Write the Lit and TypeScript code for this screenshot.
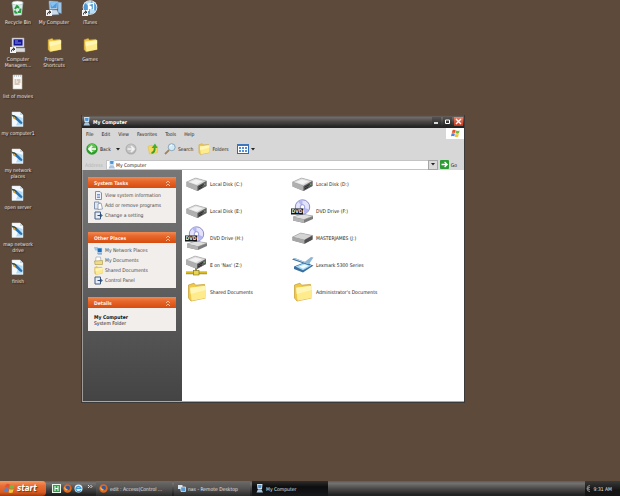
import { LitElement, html, css, svg, TemplateResult, SVGTemplateResult } from "lit";
import { customElement } from "lit/decorators.js";

const icon = (body: SVGTemplateResult, w: number, h: number, box = `0 0 ${w} ${h}`) =>
  html`<svg width=${w} height=${h} viewBox=${box} aria-hidden="true">${body}</svg>`;

const shortcutArrow = svg`<rect x="0" y="10" width="6" height="6" fill="#f4f4f4"/><path d="M1.5 14.5C1.5 12.5 2.5 12 4 12M3 10.8L4.8 12L3.4 13.6" stroke="#111" fill="none"/>`;

const recycle = icon(svg`<path d="M2 3L13 2L11.5 15L4 15.5Z" fill="#dfe9ea" stroke="#a9bcc0" stroke-width=".6"/><ellipse cx="7.5" cy="3" rx="5.5" ry="2" fill="#f9ffff" stroke="#9fb3b6" stroke-width=".6"/><path d="M5 9L7 6L9 8M10.5 8.5L10 12L8 12M4.8 10.5L5.5 12.5L7.5 12.7" stroke="#24a03c" stroke-width="2" fill="none"/>`, 16, 16);
const computerBig = icon(svg`<path d="M3 1L12 1.5L11.5 9L3.5 9.5Z" fill="#d9e6f1" stroke="#7791a9" stroke-width=".7"/><path d="M4.2 2.3L11 2.6L10.6 8L4.6 8.4Z" fill="#4f9be0"/><path d="M4.2 2.3L11 2.6L6 7Z" fill="#86c3f2"/><path d="M12 2L15.5 2.6V13.5L12 12.6Z" fill="#9cc6ea" stroke="#6a8cab" stroke-width=".5"/><path d="M5 10H11L13 14.5L5 15Z" fill="#cddbe7" stroke="#8096aa" stroke-width=".5"/>${shortcutArrow}`, 16, 16);
const itunes = icon(svg`<circle cx="8" cy="7.5" r="7.3" fill="#e9f3fa"/><circle cx="8" cy="7.5" r="6.5" fill="#4d9bd6"/><path d="M8 7.5L3 2.8A7 7 0 0 1 9 1ZM8 7.5L13.5 11A7 7 0 0 1 8 14Z" fill="#b9ddf2"/><circle cx="8" cy="7.5" r="1.8" fill="#fff"/><path d="M6.5 11V4L11.5 3V10" stroke="#fff" stroke-width="1.3" fill="none"/>${shortcutArrow}`, 16, 16);
const manage = icon(svg`<path d="M2 1H14V10H2Z" fill="#e9e9ee" stroke="#9c9ca8" stroke-width=".6"/><path d="M3.5 2.3H12.6V8.6H3.5Z" fill="#15159a"/><path d="M5 4H8M5 6H11" stroke="#a8b4ff" stroke-width=".8"/><path d="M3 11H15V15H5Z" fill="#dcdcdc" stroke="#888" stroke-width=".5"/>${shortcutArrow}`, 16, 16);
const folderArt = svg`<path d="M1.5 3L7 1.2L8.6 3.2L17.5 2.4L18.5 16L4 19L1.5 16Z" fill="#eec94b" stroke="#c49a2c" stroke-width=".7"/><path d="M3.2 5.8L18.8 3.8L19 16L4.6 18.8Z" fill="#fdeb8c"/><path d="M3.2 5.8L18.8 3.8L18.9 8L3.7 12Z" fill="#fff5b4"/>`;
const folder = (w: number, h: number) => icon(folderArt, w, h, "0 0 20 20");
const listDoc = icon(svg`<path d="M3 1H12V15H3Z" fill="#fbfaf6" stroke="#c3bfb5" stroke-width=".6"/><path d="M4 2H11" stroke="#9ab" stroke-dasharray="1 1"/><path d="M4.5 6H6.5M7 6H10.5M4.5 8H6.5M7.5 8H10.5M4.5 10H9.5" stroke="#b0907c" stroke-width="1"/>`, 16, 16);
const paintDoc = icon(svg`<path d="M2 1H10L13 4V15.5H2Z" fill="#f6fafd" stroke="#cfdbe3" stroke-width=".5"/><path d="M7 5L12.6 7V14.5H6L8 10Z" fill="#b4dcf4"/><path d="M10 1V4H13Z" fill="#c8d6e0"/><path d="M3 4.5L6 5L12.5 11.5L12 13L10 12.5L5 8Z" fill="#2a73b0"/><path d="M1 3.4L5 4.4L7 7L4.5 8Z" fill="#3b4a38"/><path d="M3 5.4L5 6L6 8.4L3.6 8Z" fill="#d8a23c"/>`, 16, 16);
const computer = icon(svg`<path d="M2 0H7.5L7 5H2.5Z" fill="#cfe3f5"/><path d="M3 1H6.6L6.2 4H3.4Z" fill="#4f97d6"/><path d="M3 5.3H6.5L8 8.4H1.5Z" fill="#a9c4dc"/>`, 9, 9);
const diskArt = svg`<path d="M1 6L10 2L21 5V10L12 15L1 10.5Z" fill="#8f8f8f"/><path d="M1 6L10 2L21 5L12 10Z" fill="#dadada" stroke="#a2a2a2" stroke-width=".5"/><path d="M4 6L10.5 3.4L17 5.2L11 8.4Z" fill="#f3f3f3"/><path d="M1 6L12 10V15L1 10.5Z" fill="#b0b0b0"/><path d="M12 10L21 5V10L12 15Z" fill="#5f5f5f"/><path d="M13 11.3L18 8.5M13 13L17 10.8" stroke="#2a2a2a" stroke-width="1"/><circle cx="19.3" cy="8.2" r=".7" fill="#7fae78"/>`;
const disk = icon(diskArt, 23, 16, "0 0 22 16");
const removable = icon(svg`<path d="M1 7L9 3L21 5.5V9.5L13 13.8L1 10.5Z" fill="#868686"/><path d="M1 7L9 3L21 5.5L13 10Z" fill="#d4d4d4" stroke="#9c9c9c" stroke-width=".5"/><path d="M1 7L13 10V13.8L1 10.5Z" fill="#a6a6a6"/><path d="M13 10L21 5.5V9.5L13 13.8Z" fill="#505050"/>`, 23, 16, "0 0 22 16");
const dvd = icon(svg`<path d="M2 18L11 15L22 17V20L13 24L2 21.5Z" fill="#7c7c7c"/><path d="M2 18L11 15L22 17L13 20.6Z" fill="#e0e0e0" stroke="#9a9a9a" stroke-width=".5"/><path d="M2 18L13 20.6V24L2 21.5Z" fill="#b3b3b3"/><circle cx="11.5" cy="8" r="7.2" fill="#e3e3fb" stroke="#8080c4" stroke-width=".9"/><path d="M11.5 8L7 2.4A7 7 0 0 1 11.5 1ZM11.5 8L17.9 10.5A7 7 0 0 1 13.5 14.5Z" fill="#b5b8f0"/><circle cx="11.5" cy="8" r="2.3" fill="#fff" stroke="#7578c4" stroke-width=".7"/><rect x="0" y="9.5" width="12" height="6" fill="#101418"/><text x="6" y="14.4" text-anchor="middle" font-size="5" font-weight="700" fill="#dfeaf0">DVD</text>`, 23, 24);
const netDisk = icon(svg`<g>${diskArt}</g><path d="M11 14V18" stroke="#8d8d7a" stroke-width="2"/><path d="M1 18.5H22" stroke="#d8b91f" stroke-width="2.4"/><path d="M1 19.8H22" stroke="#6c5d1b" stroke-width=".6"/><rect x="8.5" y="16.5" width="5.5" height="4.5" fill="#e8d552" stroke="#7d6d1c" stroke-width=".6"/>`, 23, 22);
const scanner = icon(svg`<path d="M3 10.5L13 6.5L22.5 9.5L12 16.5L3 13Z" fill="#3a6f9f"/><path d="M4.5 10.6L13 7.2L20.5 9.6L12 14.2Z" fill="#a6daf4"/><path d="M8 10.6L13.5 8.6L17.5 9.8L12 12.8Z" fill="#f0fbff"/><path d="M1 3.5L3.5 2L19.5 8L18.5 9.5Z" fill="#3f749f"/><path d="M3.5 2L19.5 8L17 8L3 3Z" fill="#b9d9ec"/><path d="M13 6.5L20 1L22.5 1.6L18 8Z" fill="#8fb6d3"/>`, 23, 17);
const green = (d: string) => icon(svg`<circle cx="6" cy="6" r="5.7" fill="#2f9b2c"/><circle cx="6" cy="5" r="4.2" fill="#62c454"/><path d=${d} stroke="#fff" stroke-width="1.7" fill="none"/>`, 12, 12);
const back = green("M10 6H3.5M6.2 2.8L3 6L6.2 9.2");
const forward = icon(svg`<circle cx="6" cy="6" r="5.5" fill="#aeaeae"/><circle cx="6" cy="5.6" r="4.4" fill="#c4c4c4"/><path d="M2.5 6H8.5M6 3L9 6L6 9" stroke="#f2f2f2" stroke-width="1.7" fill="none"/>`, 12, 12);
const upFolder = icon(svg`<path d="M1 3.4L5 2L6 3.5L10.5 3V9.5L2.5 11Z" fill="#f4d95e" stroke="#d8ba4a" stroke-width=".5"/><path d="M4.5 10C7 9.5 8 7.5 7.6 4.5" stroke="#3aa32a" stroke-width="1.8" fill="none"/><path d="M4.6 5L8 .6L10.6 5Z" fill="#43ae31"/>`, 12, 12);
const search = icon(svg`<path d="M1 11L5.2 6.8" stroke="#a5835a" stroke-width="1.8"/><circle cx="7.7" cy="4.2" r="3.5" fill="#cfeaf9" stroke="#8ca7bb" stroke-width="1"/><path d="M5.8 3.6A2.2 2.2 0 0 1 8 2" stroke="#fff" fill="none"/>`, 12, 12);
const views = icon(svg`<rect x=".5" y="1.5" width="11" height="9" fill="#fff" stroke="#3469ae"/><path d="M0 2H12" stroke="#3f77bf" stroke-width="2"/><path d="M2 5H4M5 5H7M8 5H10M2 8H4M5 8H7M8 8H10" stroke="#5a90d4" stroke-width="2"/>`, 12, 12);
const go = icon(svg`<rect width="9" height="9" rx="1" fill="#2d9a35"/><path d="M1.5 4.5H7M4.6 2L7.2 4.5L4.6 7" stroke="#fff" stroke-width="1.3" fill="none"/>`, 9, 9);
const flag = (w: number) => icon(svg`<path d="M2 1C4 0 5 .4 6.3 1.2L5.4 5C4 4.2 3 4.2 1 4.8Z" fill="#e4552b"/><path d="M7 1.5C8.5 2.3 10 2.2 11.5 1.6L10.6 5.2C9 6 7.6 5.8 6.1 5.2Z" fill="#74b843"/><path d="M.8 5.6C2.6 4.9 4 5 5.2 5.8L4.3 9.5C3 8.8 1.6 8.7 0 9.4Z" fill="#4a86d8"/><path d="M5.9 6.1C7.4 6.9 9 6.8 10.4 6.1L9.5 9.8C8 10.5 6.5 10.4 5 9.8Z" fill="#f3c534"/>`, w, w, "0 0 12 11");
const info = icon(svg`<path d="M1.5 .5H6L7.5 2V8.5H1.5Z" fill="#eef2f8" stroke="#7f90a8"/><path d="M3 3.5H6M3 5H6M3 6.5H6" stroke="#5f82b5" stroke-width=".8"/>`, 9, 9);
const programs = icon(svg`<path d="M.5 1H5V8H.5Z" fill="#dfe6f0" stroke="#8293ae"/><path d="M4 3L7 2L8.5 8L4 8.5Z" fill="#fff" stroke="#8293ae" stroke-width=".8"/>`, 9, 9);
const panel = icon(svg`<path d="M1 1H6.5V8H1Z" fill="#e6edf6" stroke="#455f84"/><path d="M3.5 4.5H7M6 2.8L8 4.5L6 6.2" stroke="#2c4d7c" stroke-width="1.1" fill="none"/>`, 9, 9);
const network = icon(svg`<path d="M0 1H4V4.5H1Z" fill="#9dc5e4"/><path d="M3 2H8V6.5H3.5Z" fill="#1c6ec0" stroke="#c8dcec" stroke-width=".6"/><path d="M3 7.2H8V8.6H4Z" fill="#6d9ac3"/>`, 9, 9);
const docs = icon(svg`<path d="M2 1H6.5L7 6H1.5Z" fill="#fff" stroke="#a0a8b2" stroke-width=".7"/><path d="M.5 5L8.5 4.5V8.5H1Z" fill="#f0dc83" stroke="#a89446" stroke-width=".6"/>`, 9, 9);
const chevrons = icon(svg`<path d="M1 3L3 1L5 3M1 6L3 4L5 6" stroke="#ffd3b6" fill="none" stroke-width=".8"/>`, 6, 6);
const caret = icon(svg`<path d="M0 0H4L2 2.4Z" fill="#222"/>`, 4, 3);
const firefox = icon(svg`<circle cx="4.5" cy="4.5" r="4.2" fill="#e06a1e"/><circle cx="4.8" cy="4" r="2.2" fill="#39589b"/><path d="M1 3C2.5 3.5 3 5 5 5.6C3.5 7.5 1.4 6.5 1 3Z" fill="#f7b146"/>`, 9, 9);
const ie = icon(svg`<circle cx="4.5" cy="4.5" r="4" fill="#d9effb"/><path d="M6.8 6.2A2.6 2.6 0 1 1 7 4.4H2.5" stroke="#3f97d6" stroke-width="1.1" fill="none"/>`, 9, 9);
const greenH = icon(svg`<rect width="9" height="9" fill="#e9f6ea"/><rect x="1" y="1" width="7" height="7" fill="#2ba344"/><path d="M3 2V7M6 2V7M3 4.5H6" stroke="#fff"/>`, 9, 9);
const remote = icon(svg`<path d="M1 1H5.5V5H1Z" fill="#d5e6f2"/><path d="M3.5 3H8.5V7.5H4Z" fill="#5b9ad0" stroke="#e7f1f8" stroke-width=".7"/>`, 9, 9);

@customElement("xp-desktop-icons")
class DesktopIcons extends LitElement {
  static styles = css`
    .grid { display: grid; grid-auto-flow: column; grid-template-rows: repeat(8, 37px); grid-auto-columns: 36px; }
    .item { display: flex; flex-direction: column; align-items: center; gap: 3px; padding: 0; border: 0; background: none; font: inherit; color: #efe9e4; line-height: 6px; text-align: center; text-shadow: 1px 1px 1px #2a1e16; white-space: pre; }
    .first { grid-row: 1; }
    svg { display: block; }
  `;
  items: [string, TemplateResult, boolean?][] = [
    ["Recycle Bin", recycle], ["Computer\nManagem...", manage], ["list of movies", listDoc], ["my computer1", paintDoc],
    ["my network\nplaces", paintDoc], ["open server", paintDoc], ["map network\ndrive", paintDoc], ["finish", paintDoc],
    ["My Computer", computerBig, true], ["Program\nShortcuts", folder(15, 16)],
    ["iTunes", itunes, true], ["Games", folder(15, 16)],
  ];
  render() {
    return html`<div class="grid">${this.items.map(([t, i, first]) => html`<button class="item ${first ? "first" : ""}">${i}<span>${t}</span></button>`)}</div>`;
  }
}

@customElement("xp-task-group")
class TaskGroup extends LitElement {
  static properties = { heading: {}, links: { attribute: false } };
  declare heading: string;
  declare links: [string, TemplateResult][];
  static styles = css`
    :host { display: block; }
    .head { display: flex; align-items: center; justify-content: space-between; width: 100%; height: 11px; padding: 0 5px 0 6px; border: 0; font: inherit; font-weight: 700; color: #ffefe2; background: linear-gradient(#f08a52, #e8682c 35%, #d64c0e); }
    .body { display: flex; flex-direction: column; padding: 2px 6px 3px; background: #f1eeeb; color: #4a4745; }
    a { display: flex; align-items: center; gap: 2px; height: 10px; color: inherit; text-decoration: none; white-space: nowrap; }
    svg { display: block; }
  `;
  render() {
    return html`<button class="head"><span>${this.heading}</span>${chevrons}</button>
      <div class="body">${this.links ? this.links.map(([t, i]) => html`<a href="#">${i}<span>${t}</span></a>`) : html`<slot></slot>`}</div>`;
  }
}

@customElement("xp-explorer")
class Explorer extends LitElement {
  static styles = css`
    :host { display: flex; flex-direction: column; box-sizing: border-box; border: 1px solid #3c3a39; border-top: 0; background: #d7d7d7; color: #1c1c1c; }
    svg { display: block; flex: none; }
    button { padding: 0; border: 0; background: none; font: inherit; color: inherit; display: flex; align-items: center; gap: 2px; }
    .title { display: flex; align-items: center; gap: 2px; height: 13px; flex: none; padding-right: 1px; color: #fff; font-weight: 700; background: linear-gradient(#4e4946, #716b68 20%, #4a4847 50%, #242424 90%); }
    .grow { flex: 1; }
    .win { width: 9px; height: 9px; justify-content: center; background: linear-gradient(#565452, #262626); }
    .close { background: linear-gradient(#e9826b, #c23418); }
    .menu { display: flex; align-items: center; height: 11px; flex: none; padding-left: 4px; gap: 8px; }
    .logo { display: flex; align-items: center; justify-content: center; width: 18px; height: 11px; margin-left: auto; background: #fff; }
    .tools { display: flex; align-items: center; height: 20px; flex: none; padding-left: 4px; gap: 5px; }
    .tools .up { margin-left: 5px; }
    .tools .view { margin-left: 3px; }
    .address { display: flex; align-items: center; height: 11px; flex: none; padding: 0 7px 0 3px; gap: 2px; }
    .address label { width: 19px; color: #b3b3b3; }
    .field { display: flex; flex: 1; align-items: center; height: 10px; background: #fff; border: 1px solid #c4c4c4; box-sizing: border-box; }
    input { flex: 1; min-width: 0; height: 7px; padding: 0; border: 0; outline: 0; background: none; font: inherit; color: inherit; }
    .drop { width: 8px; height: 8px; justify-content: center; background: #dadada; outline: 1px solid #a5a5a5; }
    .main { display: flex; flex: 1; min-height: 0; border-bottom: 1px solid #a9a7a5; }
    .side { width: 88px; flex: none; display: flex; flex-direction: column; gap: 9px; padding: 7px 6px 0 5px; border-left: 1px solid #9d9b99; background: linear-gradient(#777, #6a6a6a 30%, #444); }
    .side xp-task-group { flex: none; margin-right: 0; }
    .files { flex: 1; display: grid; grid-template-columns: repeat(auto-fill, 106px); grid-auto-rows: 27px; align-content: start; padding-left: 3px; background: #fff; }
    .file { white-space: nowrap; }
    .pic { display: flex; justify-content: center; width: 23px; }
    strong, .sub { height: 6px; line-height: 6px; color: #111; }
    .gap { box-sizing: border-box; padding-top: 4px; display: flex; flex-direction: column; height: 18px; }
  `;
  files: [string, TemplateResult][] = [
    ["Local Disk (C:)", disk], ["Local Disk (D:)", disk], ["Local Disk (E:)", disk], ["DVD Drive (F:)", dvd],
    ["DVD Drive (H:)", dvd], ["MASTERJAMES (J:)", removable], ["E on 'Nas' (Z:)", netDisk], ["Lexmark 5300 Series", scanner],
    ["Shared Documents", folder(20, 20)], ["Administrator's Documents", folder(20, 20)],
  ];
  render() {
    return html`
      <div class="title">${computer}<span class="grow">My Computer</span>
        <button class="win" aria-label="Minimize">${icon(svg`<path d="M1 5H5" stroke="#fff" stroke-width="1.6"/>`, 7, 7)}</button>
        <button class="win" aria-label="Maximize">${icon(svg`<path d="M1.5 2H5.5V5.5H1.5Z" stroke="#fff" fill="none"/>`, 7, 7)}</button>
        <button class="win close" aria-label="Close">${icon(svg`<path d="M1 1L6 6M6 1L1 6" stroke="#fff" stroke-width="1.3"/>`, 7, 7)}</button>
      </div>
      <div class="menu">${["File", "Edit", "View", "Favorites", "Tools", "Help"].map((m) => html`<button>${m}</button>`)}<span class="logo">${flag(9)}</span></div>
      <div class="tools">
        <button>${back}Back</button><button aria-label="Back history">${caret}</button><button aria-label="Forward">${forward}</button>
        <button class="up" aria-label="Up">${upFolder}</button><button>${search}Search</button><button>${folder(12, 12)}Folders</button>
        <button class="view" aria-label="Views">${views}${caret}</button>
      </div>
      <div class="address"><label for="addr">Address</label>
        <div class="field">${computer}<input id="addr" value="My Computer" /><button class="drop" aria-label="Show addresses">${caret}</button></div>
        <button>${go}Go</button>
      </div>
      <div class="main">
        <div class="side">
          <xp-task-group heading="System Tasks" .links=${[["View system information", info], ["Add or remove programs", programs], ["Change a setting", panel]]}></xp-task-group>
          <xp-task-group heading="Other Places" .links=${[["My Network Places", network], ["My Documents", docs], ["Shared Documents", folder(9, 9)], ["Control Panel", panel]]}></xp-task-group>
          <xp-task-group heading="Details"><div class="gap"><strong>My Computer</strong><span class="sub">System Folder</span></div></xp-task-group>
        </div>
        <div class="files">${this.files.map(([t, i]) => html`<button class="file"><span class="pic">${i}</span>${t}</button>`)}</div>
      </div>`;
  }
}

@customElement("xp-taskbar")
class Taskbar extends LitElement {
  static styles = css`
    :host { display: flex; align-items: stretch; height: 15px; color: #e4e4e4; background: linear-gradient(#5e5c5a, #757371 15%, #4b4a49 50%, #222 90%); }
    svg { display: block; flex: none; }
    button { display: flex; align-items: center; gap: 3px; padding: 0; border: 0; background: none; font: inherit; color: inherit; }
    .start { width: 46px; flex: none; padding-left: 4px; gap: 2px; color: #fff; font-size: 8px; font-weight: 700; font-style: italic; border-radius: 0 4px 4px 0; background: linear-gradient(#f29a62, #ea7038 30%, #d95a20 75%, #9a3a10); text-shadow: 1px 1px 1px #7a2c0c; }
    .quick { display: flex; gap: 2px; width: 44px; padding-left: 6px; }
    .tasks { display: flex; flex: 1; gap: 2px; }
    .task { width: 76px; padding-left: 3px; gap: 2px; white-space: nowrap; background: linear-gradient(#6d6b6a, #555352 50%, #2b2b2b); }
    .active { background: linear-gradient(#2f2d2c, #0c0d0f 40%, #17191b); }
    .tray { display: flex; align-items: center; gap: 3px; padding: 0 8px 0 1px; background: linear-gradient(#3b3a39, #151515 60%); }
  `;
  render() {
    return html`
      <button class="start">${flag(11)}start</button>
      <div class="quick"><button aria-label="Media center">${greenH}</button><button aria-label="Firefox">${firefox}</button><button aria-label="Internet Explorer">${ie}</button>
        <button aria-label="More">${icon(svg`<path d="M3 1L4.5 2.5L3 4M5.5 1L7 2.5L5.5 4" stroke="#fff" stroke-width=".8" fill="none"/>`, 8, 10)}</button></div>
      <div class="tasks">
        <button class="task">${firefox}edit : Access(Control ...</button>
        <button class="task">${remote}nas - Remote Desktop</button>
        <button class="task active">${computer}My Computer</button>
      </div>
      <div class="tray">${icon(svg`<path d="M4 1.5A3 3 0 1 0 4 7.5" stroke="#8c8c8c" fill="none"/><path d="M3.5 3L2 4.5L3.5 6" stroke="#fff" fill="none" stroke-width=".8"/>`, 5, 9)}<time>9:31 AM</time></div>`;
  }
}

@customElement("app-root")
class AppRoot extends LitElement {
  static styles = css`
    :host { display: flex; flex-direction: column; position: relative; height: 100vh; overflow: hidden; background: #5e4a3b; font: 5px/6px "DejaVu Sans Condensed", "DejaVu Sans", sans-serif; font-stretch: condensed; }
    xp-desktop-icons { flex: 1; min-height: 0; }
    xp-explorer { position: absolute; left: 81px; right: 155px; top: 115px; bottom: 93px; }
  `;
  render() {
    return html`<xp-desktop-icons></xp-desktop-icons><xp-explorer></xp-explorer><xp-taskbar></xp-taskbar>`;
  }
}
